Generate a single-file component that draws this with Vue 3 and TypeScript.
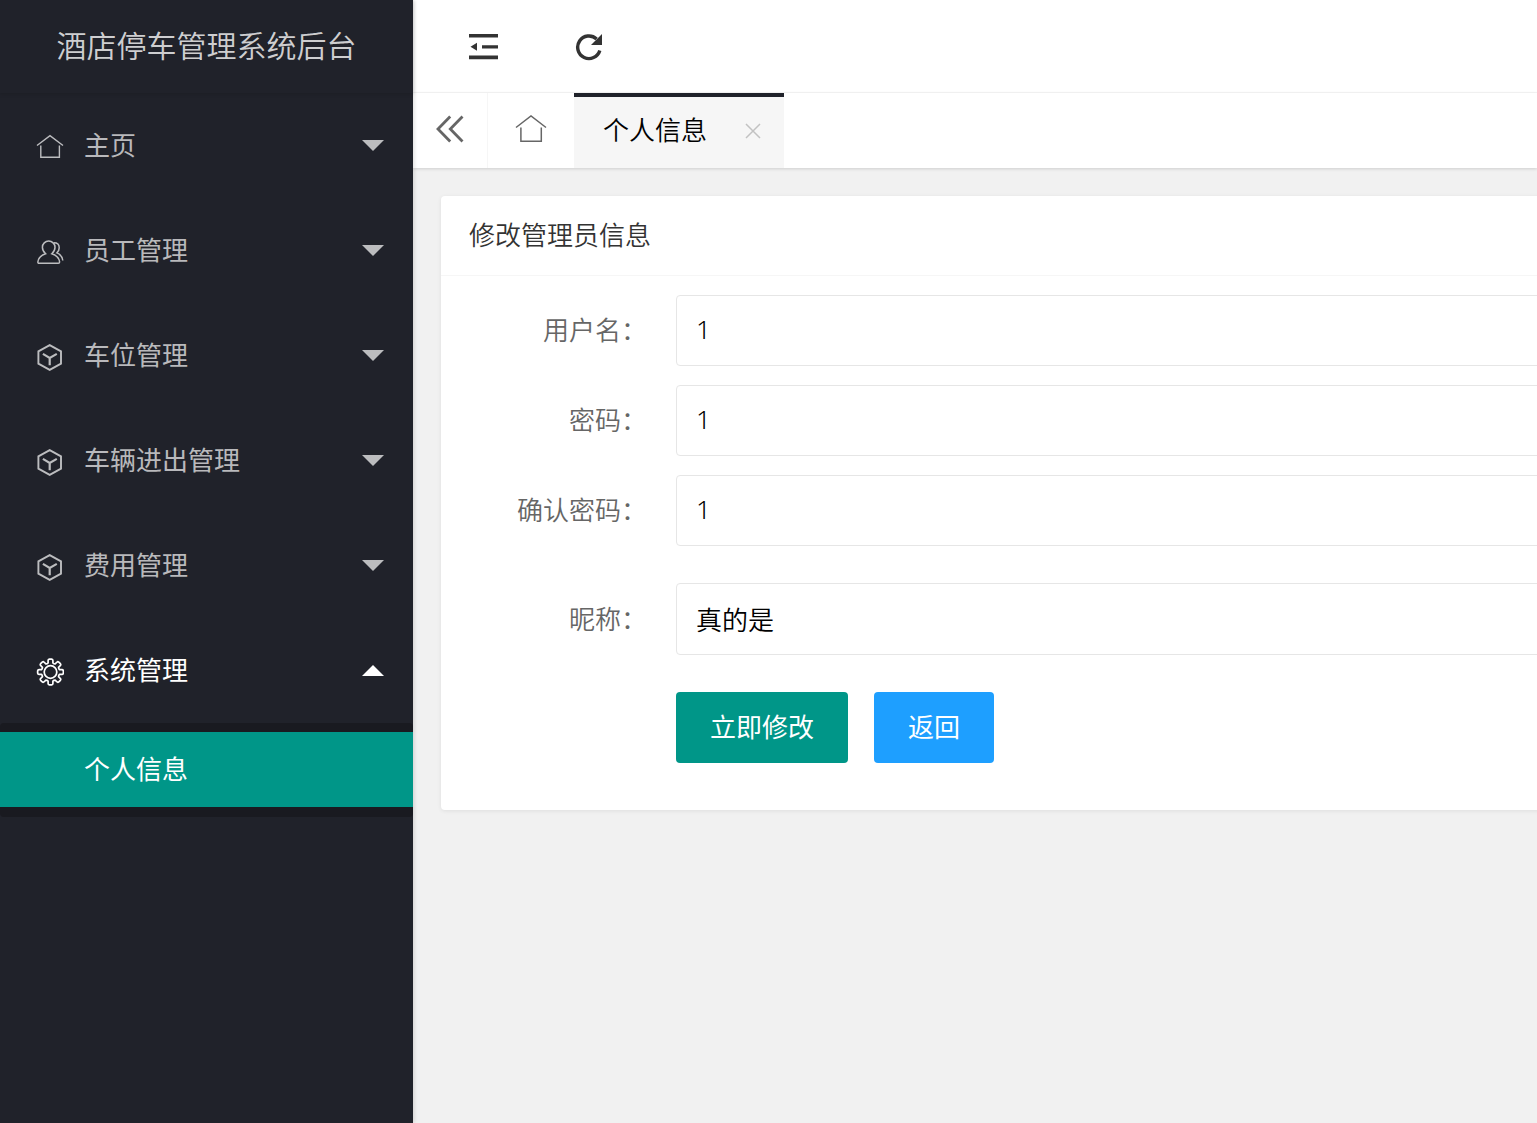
<script setup lang="ts">
import { ref } from 'vue'

interface MenuItem {
  label: string
  icon: 'home' | 'users' | 'cube' | 'gear'
  open?: boolean
  children?: string[]
}

const menu: MenuItem[] = [
  { label: '主页', icon: 'home' },
  { label: '员工管理', icon: 'users' },
  { label: '车位管理', icon: 'cube' },
  { label: '车辆进出管理', icon: 'cube' },
  { label: '费用管理', icon: 'cube' },
  { label: '系统管理', icon: 'gear', open: true, children: ['个人信息'] },
]

const fields = ref([
  { id: 'username', label: '用户名：', value: '1' },
  { id: 'password', label: '密码：', value: '1' },
  { id: 'confirm', label: '确认密码：', value: '1' },
  { id: 'nickname', label: '昵称：', value: '真的是' },
])

// Outline of an eight-toothed cog: for each tooth, two root and two tip points.
const point = (radius: number, degrees: number): string => {
  const a = (degrees * Math.PI) / 180
  return `${(14.5 + radius * Math.sin(a)).toFixed(2)} ${(14 - radius * Math.cos(a)).toFixed(2)}`
}
const gearPath =
  'M' +
  Array.from({ length: 8 }, (_, i) => {
    const c = i * 45
    return [
      `${point(9.3, c - 15)}L${point(11.6, c - 12)}`,
      `Q${point(12.9, c - 11)} ${point(12.9, c - 5)}`,
      `L${point(12.9, c + 5)}Q${point(12.9, c + 11)} ${point(11.6, c + 12)}`,
      `L${point(9.3, c + 15)}Q${point(8.7, c + 22.5)} `,
    ].join('')
  }).join('') +
  `${point(9.3, -15)}Z`
</script>

<template>
  <div class="layout">
    <aside class="side">
      <div class="logo">酒店停车管理系统后台</div>
      <nav>
        <template v-for="item in menu" :key="item.label">
          <button type="button" class="nav-item" :class="{ open: item.open }">
            <svg class="nav-icon" viewBox="0 0 28 28" fill="none" stroke="currentColor">
              <g v-if="item.icon === 'home'" stroke-width="1.4">
                <path d="M1 12.5 14 2.6 27 12.5" />
                <path d="M4.8 12.5V24.3H23.4V12.5" />
              </g>
              <g v-else-if="item.icon === 'users'" stroke-width="1.5">
                <path d="M9.600 15.800C7.500 14 6.400 11.800 6.400 9.300a6.300 6.300 0 0 1 12.600 0c0 2.500-1.100 4.700-3.200 6.500 4.700 1.600 7.400 4.300 7.800 8.100 0 1-.5 1.400-1.300 1.400H3.100c-.8 0-1.300-.4-1.200-1.400.4-3.800 3-6.500 7.700-8.100Z" />
                <path d="M18 4.800c3.400 0 5.200 2.200 5.200 4.900 0 2-.8 3.900-2.300 5.200 3.300 1.300 5.400 3.600 5.900 7.600" />
              </g>
              <g v-else-if="item.icon === 'cube'" stroke-width="1.900">
                <path d="M13.700 2.100 25 8.300V20.700L13.700 26.900 2.400 20.700V8.300Z" />
                <path d="M6.900 10.900 13.700 14.900 20.800 10.900M13.700 14.900V22.300" stroke-width="2.200" />
              </g>
              <g v-else stroke-width="1.700" stroke-linejoin="round">
                <path :d="gearPath" />
                <circle cx="14.500" cy="14" r="6.300" />
              </g>
            </svg>
            <span class="nav-label">{{ item.label }}</span>
            <span class="caret"></span>
          </button>
          <div v-if="item.children" class="sub">
            <a v-for="child in item.children" :key="child" href="#" class="sub-item">{{ child }}</a>
          </div>
        </template>
      </nav>
    </aside>

    <div class="main">
      <header class="topbar">
        <button type="button" class="tool" aria-label="收起菜单">
          <svg width="30" height="28" viewBox="0 0 30 28" fill="currentColor">
            <path d="M0 1H29V4.600H0ZM13 12.200H29V15.400H13ZM0 22.600H29V26.200H0ZM1.500 13.800 8 9.800V17.800Z" />
          </svg>
        </button>
        <button type="button" class="tool" aria-label="刷新">
          <svg width="28" height="28" viewBox="0 0 28 28">
            <path d="M24.800 17.500A11.300 11.300 0 1 1 21.600 5.900" fill="none" stroke="currentColor" stroke-width="3.400" />
            <path d="M27 1V12H16Z" fill="currentColor" />
          </svg>
        </button>
      </header>

      <div class="tabs">
        <button type="button" class="tab-prev" aria-label="向左">
          <svg width="28" height="28" viewBox="0 0 28 28" fill="none" stroke="currentColor" stroke-width="2.800">
            <path d="M14.200 1.500 2 14 14.200 26.500M26.500 1.500 14.300 14 26.500 26.500" />
          </svg>
        </button>
        <button type="button" class="tab-home" aria-label="主页">
          <svg width="32" height="28" viewBox="0 0 32 28" fill="none" stroke="currentColor" stroke-width="1.500">
            <path d="M1 12.500 16 1 31 12.500" />
            <path d="M5.900 12.500V26.200H26.300V12.500" />
          </svg>
        </button>
        <div class="tab-active">
          <a href="#">个人信息</a>
          <button type="button" class="close" aria-label="关闭">
            <svg width="16" height="16" viewBox="0 0 16 16" fill="none" stroke="currentColor" stroke-width="1.500">
              <path d="M1 1 15 15M15 1 1 15" />
            </svg>
          </button>
        </div>
      </div>

      <main class="content">
        <section class="card">
          <h1>修改管理员信息</h1>
          <form @submit.prevent>
            <div v-for="f in fields" :key="f.id" class="row" :class="f.id">
              <label :for="f.id">{{ f.label }}</label>
              <input :id="f.id" v-model="f.value" type="text" />
            </div>
            <div class="actions">
              <button type="submit" class="btn primary">立即修改</button>
              <button type="button" class="btn back">返回</button>
            </div>
          </form>
        </section>
      </main>
    </div>
  </div>
</template>

<style>
body {
  margin: 0;
  overflow-x: hidden;
}
</style>

<style scoped>
.layout {
  display: flex;
  min-height: 100vh;
  overflow: hidden;
  background: #f1f1f1;
  font-family: "Noto Sans", "Noto Sans CJK SC", sans-serif;
  font-size: 26px;
  line-height: 39px;
  color: #333;
}
.layout * {
  box-sizing: border-box;
}
button {
  padding: 0;
  border: 0;
  background: none;
  color: inherit;
  font: inherit;
  cursor: pointer;
}
a {
  color: inherit;
  text-decoration: none;
}
svg {
  display: block;
}

.side {
  position: relative;
  flex: none;
  width: 413px;
  background: #20222a;
  color: rgba(255, 255, 255, 0.7);
  box-shadow: 1px 0 4px rgba(0, 0, 0, 0.15);
}
.logo {
  height: 93px;
  color: rgba(255, 255, 255, 0.8);
  font-size: 30px;
  font-weight: 350;
  line-height: 92px;
  text-align: center;
  box-shadow: 0 1px 4px rgba(0, 0, 0, 0.15);
}
.nav-item {
  display: flex;
  align-items: center;
  width: 100%;
  height: 105px;
  padding: 0 29px 0 36px;
}
.nav-icon {
  width: 28px;
  height: 28px;
  margin: 2px 20px 0 0;
}
.nav-label {
  flex: 1;
  text-align: left;
}
.caret {
  border: 11px solid transparent;
  border-top-color: currentColor;
  border-bottom: 0;
}
.open {
  color: #fff;
}
.open .caret {
  border: 11px solid transparent;
  border-top: 0;
  border-bottom-color: currentColor;
}
.sub {
  padding: 9px 0 10px;
  border-radius: 4px;
  background: #191a20;
}
.sub-item {
  display: block;
  padding-left: 84px;
  background: #009688;
  color: #fff;
  line-height: 75px;
}

.main {
  flex: 1;
  min-width: 0;
}
.topbar {
  display: flex;
  height: 93px;
  padding: 2px 0 0 18px;
  border-bottom: 1px solid #f6f6f6;
  background: #fff;
}
.tool {
  display: grid;
  place-items: center;
  width: 105px;
}
.tabs {
  display: flex;
  height: 75px;
  background: #fff;
  color: #666;
  box-shadow: 0 1px 3px rgba(0, 0, 0, 0.15);
}
.tab-prev,
.tab-home {
  display: grid;
  place-items: center;
  padding-bottom: 3px;
}
.tab-prev {
  width: 75px;
  border-right: 1px solid #f6f6f6;
}
.tab-home {
  width: 86px;
}
.tab-active {
  display: flex;
  align-items: center;
  gap: 38px;
  padding: 0 23px 4px 29px;
  border-top: 4px solid #20222a;
  background: #f6f6f6;
  color: #000;
  font-weight: 350;
}
.close {
  color: #c2c2c2;
}

.content {
  padding: 28px 0 28px 28px;
}
/* The panel runs on past the right edge of the view. */
.card {
  margin-right: -56px;
  border-radius: 4px;
  background: #fff;
  box-shadow: 0 1px 4px rgba(0, 0, 0, 0.08);
}
h1 {
  margin: 0;
  padding: 0 28px;
  border-bottom: 1px solid #f6f6f6;
  font-size: 26px;
  font-weight: 350;
  line-height: 79px;
}
form {
  padding: 19px 28px 47px;
}
.row {
  display: flex;
  align-items: center;
  margin-bottom: 19px;
}
label {
  width: 207px;
  padding-right: 29px;
  color: #666;
  font-weight: 350;
  text-align: right;
}
input {
  flex: 1;
  min-width: 0;
  height: 71px;
  padding: 0 19px 4px;
  border: 1px solid #e6e6e6;
  border-radius: 4px;
  background: #fff;
  color: #000;
  font: inherit;
  font-weight: 350;
  outline: none;
}
.row.nickname {
  margin: 37px 0;
}
.nickname input {
  height: 72px;
  padding-bottom: 0;
}
.actions {
  display: flex;
  gap: 26px;
  padding-left: 207px;
}
.btn {
  height: 71px;
  padding: 0 34px;
  border-radius: 4px;
  color: #fff;
}
.primary {
  background: #009688;
}
.back {
  background: #1e9fff;
}
</style>
